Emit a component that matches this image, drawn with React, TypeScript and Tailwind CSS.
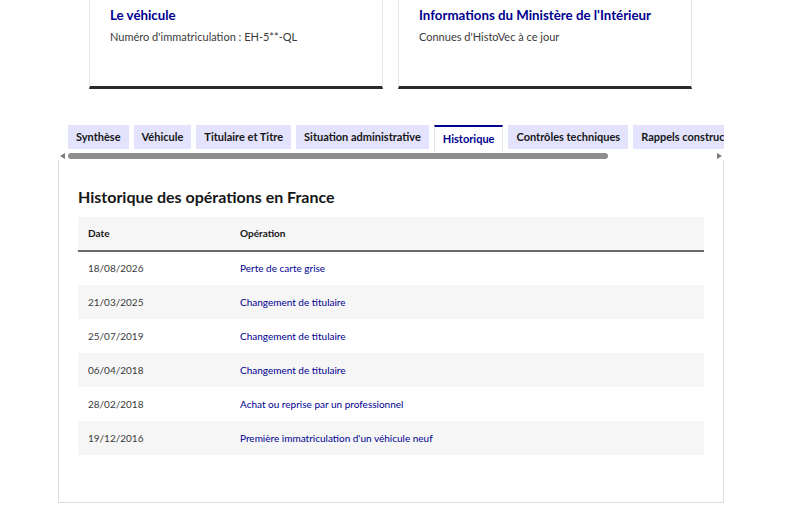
const tabs = [
  "Synthèse",
  "Véhicule",
  "Titulaire et Titre",
  "Situation administrative",
  "Historique",
  "Contrôles techniques",
  "Rappels constructeur",
];

const rows = [
  { date: "18/08/2026", op: "Perte de carte grise" },
  { date: "21/03/2025", op: "Changement de titulaire" },
  { date: "25/07/2019", op: "Changement de titulaire" },
  { date: "06/04/2018", op: "Changement de titulaire" },
  { date: "28/02/2018", op: "Achat ou reprise par un professionnel" },
  { date: "19/12/2016", op: "Première immatriculation d'un véhicule neuf" },
];

const Card = ({ title, text }: { title: string; text: string }) => (
  <div className="w-[294px] h-[89px] border-x border-[#e5e5e5] border-b-[3px] border-b-[#2a2a2a] pl-5 pt-[5px]">
    <div className="text-[13.3px] leading-5 font-bold text-[#000091] whitespace-nowrap">{title}</div>
    <div className="mt-[4px] text-[11px] leading-4 text-[#3a3a3a]">{text}</div>
  </div>
);

export default function App() {
  return (
    <div
      className="w-[800px] h-[510px] bg-white overflow-hidden"
      style={{ fontFamily: 'Lato, "Open Sans", sans-serif' }}
    >
      <div className="flex gap-[15px] pl-[89px]">
        <Card title="Le véhicule" text="Numéro d'immatriculation : EH-5**-QL" />
        <Card title="Informations du Ministère de l'Intérieur" text="Connues d'HistoVec à ce jour" />
      </div>

      <div className="ml-[58px] w-[666px] mt-[36px]">
        <div className="overflow-hidden h-[27px]">
          <div className="flex gap-[5px] pl-[10px] whitespace-nowrap">
            {tabs.map((t) =>
              t === "Historique" ? (
                <div
                  key={t}
                  className="h-[27px] px-[8px] flex items-center bg-white border-t-2 border-[#000091] border-x border-x-[#e5e5e5] text-[11px] font-bold text-[#000091] shrink-0"
                >
                  {t}
                </div>
              ) : (
                <div
                  key={t}
                  className="h-[24px] px-[8px] flex items-center bg-[#e3e3fd] text-[11px] font-bold text-[#161616] shrink-0"
                >
                  {t}
                </div>
              )
            )}
          </div>
        </div>

        {/* fake horizontal scrollbar */}
        <div className="flex items-center h-[8px] px-[2px] gap-[3px]">
          <svg width="5" height="6" viewBox="0 0 5 6">
            <path d="M5 0 L0 3 L5 6 Z" fill="#7a7a7a" />
          </svg>
          <div className="flex-1 flex items-center">
            <div className="w-[540px] h-[6px] rounded-full bg-[#8e8e8e]" />
          </div>
          <svg width="5" height="6" viewBox="0 0 5 6">
            <path d="M0 0 L5 3 L0 6 Z" fill="#7a7a7a" />
          </svg>
        </div>

        <div className="border-x border-b border-[#dddddd] h-[343px] px-[19px] pt-[27px]">
          <h2 className="text-[16px] leading-5 font-bold text-[#161616]">
            Historique des opérations en France
          </h2>
          <table className="mt-[10px] w-[626px] text-[10px] text-[#3a3a3a] border-collapse">
            <thead>
              <tr className="bg-[#f6f6f6] border-b-2 border-[#6a6a6a] h-[34px]">
                <th className="w-[162px] pl-[10px] text-left font-bold text-[#161616]">Date</th>
                <th className="text-left font-bold text-[#161616]">Opération</th>
              </tr>
            </thead>
            <tbody>
              {rows.map((r, i) => (
                <tr key={i} className={`h-[34px] ${i % 2 === 1 ? "bg-[#f6f6f6]" : "bg-white"}`}>
                  <td className="pl-[10px]">{r.date}</td>
                  <td className="text-[#000091]">{r.op}</td>
                </tr>
              ))}
            </tbody>
          </table>
        </div>
      </div>
    </div>
  );
}
